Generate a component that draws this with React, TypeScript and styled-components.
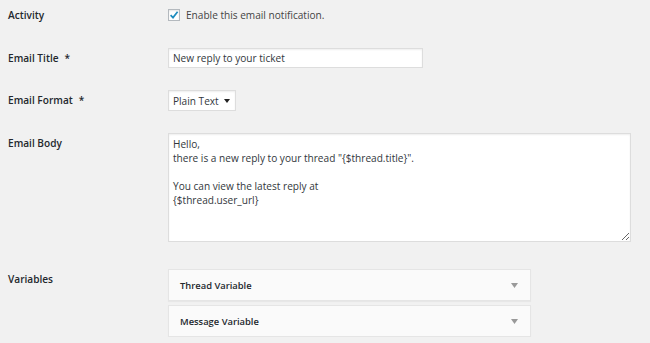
import React from "react";
import styled, { createGlobalStyle } from "styled-components";

const Global = createGlobalStyle`
  html, body { margin: 0; padding: 0; background: #f1f1f1; }
  body { font-family: "Open Sans", "DejaVu Sans", sans-serif; font-size: 10.1px; color: #444; }
  * { box-sizing: border-box; }
`;

const Page = styled.div`
  padding: 6px 0 0 8px;
  display: flex;
  flex-direction: column;
`;

const Row = styled.div<{ $mt: number }>`
  display: grid;
  grid-template-columns: 160px 1fr;
  align-items: start;
  margin-top: ${(p) => p.$mt}px;
`;

const Label = styled.div<{ $lh: number; $pt?: number }>`
  font-weight: 600;
  color: #23282d;
  line-height: ${(p) => p.$lh}px;
  padding-top: ${(p) => p.$pt ?? 0}px;
`;

const Req = styled.span`
  margin-left: 6px;
`;

const CheckLine = styled.label`
  display: flex;
  align-items: center;
  gap: 6px;
  line-height: 18px;
`;

const Box = styled.span`
  width: 12px;
  height: 12px;
  background: #fff;
  border: 1px solid #b4b9be;
  box-shadow: inset 0 1px 2px rgba(0, 0, 0, 0.1);
  display: flex;
  align-items: center;
  justify-content: center;
`;

const TextInput = styled.input`
  width: 255px;
  height: 20px;
  border: 1px solid #ddd;
  box-shadow: inset 0 1px 2px rgba(0, 0, 0, 0.07);
  background: #fff;
  font: inherit;
  color: #32373c;
  padding: 0 4px;
  outline: none;
`;

const SelectBox = styled.div`
  width: 68px;
  height: 21px;
  border: 1px solid #ddd;
  box-shadow: inset 0 1px 2px rgba(0, 0, 0, 0.07);
  background: #fff;
  display: flex;
  align-items: center;
  justify-content: space-between;
  padding: 0 5px 0 4px;
  color: #32373c;
`;

const TextArea = styled.textarea`
  width: 463px;
  height: 109px;
  border: 1px solid #ddd;
  box-shadow: inset 0 1px 2px rgba(0, 0, 0, 0.07);
  background: #fff;
  font: inherit;
  line-height: 14px;
  color: #32373c;
  padding: 3px 4px;
  outline: none;
  margin: 0;
  display: block;
`;

const Panels = styled.div`
  display: flex;
  flex-direction: column;
  gap: 4px;
  width: 363px;
`;

const Panel = styled.div`
  height: 32px;
  background: #fafafa;
  border: 1px solid #e5e5e5;
  box-shadow: 0 1px 1px rgba(0, 0, 0, 0.04);
  display: flex;
  align-items: center;
  justify-content: space-between;
  padding: 0 12px 0 11px;
  font-weight: 600;
  font-size: 9.4px;
  color: #23282d;
`;

const body = `Hello,
there is a new reply to your thread "{$thread.title}".

You can view the latest reply at
{$thread.user_url}`;

export default function App() {
  return (
    <>
      <Global />
      <Page>
        <Row $mt={0}>
          <Label $lh={18}>Activity</Label>
          <CheckLine>
            <Box>
              <svg width="10" height="10" viewBox="0 0 10 10">
                <path d="M1.6 5.2 L4 7.6 L8.6 1.8" fill="none" stroke="#1e8cbe" strokeWidth="1.7" />
              </svg>
            </Box>
            Enable this email notification.
          </CheckLine>
        </Row>
        <Row $mt={24}>
          <Label $lh={20}>
            Email Title<Req>*</Req>
          </Label>
          <TextInput defaultValue="New reply to your ticket" />
        </Row>
        <Row $mt={22}>
          <Label $lh={21}>
            Email Format<Req>*</Req>
          </Label>
          <SelectBox>
            <span>Plain Text</span>
            <svg width="6" height="4" viewBox="0 0 6 4">
              <path d="M0 0 H6 L3 4 Z" fill="#222" />
            </svg>
          </SelectBox>
        </Row>
        <Row $mt={22}>
          <Label $lh={20}>Email Body</Label>
          <TextArea defaultValue={body} spellCheck={false} />
        </Row>
        <Row $mt={27}>
          <Label $lh={20}>Variables</Label>
          <Panels>
            {["Thread Variable", "Message Variable"].map((t) => (
              <Panel key={t}>
                <span>{t}</span>
                <svg width="7" height="5" viewBox="0 0 7 5">
                  <path d="M0 0 H7 L3.5 5 Z" fill="#999" />
                </svg>
              </Panel>
            ))}
          </Panels>
        </Row>
      </Page>
    </>
  );
}
